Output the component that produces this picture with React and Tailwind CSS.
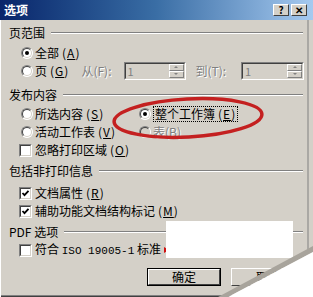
import React from 'react';

const font = "font-['Noto_Sans_CJK_SC','Liberation_Sans',sans-serif]";

const Key = ({ k }) => (
  <span className="ml-[3px] tracking-[1px]">(<span className="underline underline-offset-1">{k}</span>)</span>
);

const Radio = ({ checked, disabled }) => (
  <span className={`w-[12px] h-[12px] rounded-full border border-t-[#808080] border-l-[#808080] border-b-white border-r-white flex items-center justify-center shrink-0 ${disabled ? 'bg-[#d4d0c8]' : 'bg-white'}`}>
    <span className="w-[10px] h-[10px] rounded-full border border-t-[#404040] border-l-[#404040] border-b-[#d4d0c8] border-r-[#d4d0c8] flex items-center justify-center">
      {checked && <span className="w-[4px] h-[4px] rounded-full bg-black"></span>}
    </span>
  </span>
);

const Checkbox = ({ checked }) => (
  <span className="w-[13px] h-[13px] bg-white border border-t-[#808080] border-l-[#808080] border-b-white border-r-white shrink-0">
    <span className="block w-full h-full border border-t-[#404040] border-l-[#404040] border-b-[#d4d0c8] border-r-[#d4d0c8]">
      {checked && (
        <svg width="9" height="9" viewBox="0 0 9 9" className="block">
          <path d="M1.5 4 L3.5 6.2 L7.5 1.8" stroke="black" strokeWidth="1.8" fill="none" />
        </svg>
      )}
    </span>
  </span>
);

const GroupLabel = ({ children, className = '' }) => (
  <div className={`flex items-center h-[16px] pl-[8px] pr-[10px] ${className}`}>
    <span>{children}</span>
    <span className="flex-1 ml-[6px] h-[2px] border-t border-t-[#808080] border-b border-b-white"></span>
  </div>
);

const Spin = () => (
  <div className="flex items-center h-[18px] border border-t-[#808080] border-l-[#808080] border-b-white border-r-white">
    <div className="flex-1 h-full flex items-center bg-[#d4d0c8] border border-t-[#404040] border-l-[#404040] border-b-[#d4d0c8] border-r-[#d4d0c8]">
      <span className="pl-[2px] text-[#808080] text-[11px]">1</span>
      <div className="ml-auto w-[15px] h-full flex flex-col">
        <div className="flex-1 flex items-center justify-center border border-t-white border-l-white border-b-[#808080] border-r-[#808080]">
          <span className="w-0 h-0 border-l-[2px] border-r-[2px] border-b-[2px] border-l-transparent border-r-transparent border-b-[#808080]"></span>
        </div>
        <div className="flex-1 flex items-center justify-center border border-t-white border-l-white border-b-[#808080] border-r-[#808080]">
          <span className="w-0 h-0 border-l-[2px] border-r-[2px] border-t-[2px] border-l-transparent border-r-transparent border-t-[#808080]"></span>
        </div>
      </div>
    </div>
  </div>
);

const Button = ({ children, def }) => (
  <div className={`h-[18px] w-[74px] flex items-center justify-center ${def ? 'border border-black' : ''}`}>
    <div className="w-full h-full flex items-center justify-center border border-t-white border-l-white border-b-[#404040] border-r-[#404040] bg-[#d4d0c8]">
      {children}
    </div>
  </div>
);

export default function App() {
  return (
    <div className={`w-[313px] h-[297px] relative overflow-hidden bg-[#d4d0c8] text-[12px] leading-[14px] text-black ${font}`}>
      {/* title bar */}
      <div className="h-[20px] flex items-center bg-gradient-to-r from-[#0a246a] via-[#3a6ea5] to-[#a6caf0] pl-[4px] pr-[6px]">
        <span className="text-white font-bold text-[12px]">选项</span>
        <div className="ml-auto flex gap-[2px]">
          <div className="w-[16px] h-[12px] bg-[#d4d0c8] border border-t-white border-l-white border-b-[#404040] border-r-[#404040] flex items-center justify-center text-[10px] font-bold leading-none">?</div>
          <div className="w-[16px] h-[12px] bg-[#d4d0c8] border border-t-white border-l-white border-b-[#404040] border-r-[#404040] flex items-center justify-center text-[10px] font-bold leading-none">✕</div>
        </div>
      </div>

      <div className="border-l border-l-white flex flex-col h-[277px]">
        <GroupLabel className="mt-[5px]">页范围</GroupLabel>
        <div className="mt-[3px] h-[17px] flex items-center pl-[20px] gap-[2px]">
          <Radio checked />
          <span>全部<Key k="A" /></span>
        </div>
        <div className="h-[19px] flex items-center pl-[20px] pr-[9px]">
          <Radio />
          <span className="ml-[2px]">页<Key k="G" /></span>
          <span className="ml-[12px] text-[#808080] [text-shadow:1px_1px_0_#fff]">从(F):</span>
          <div className="ml-[12px] w-[62px]"><Spin /></div>
          <span className="ml-[10px] text-[#808080] [text-shadow:1px_1px_0_#fff]">到(T):</span>
          <div className="ml-auto w-[63px]"><Spin /></div>
        </div>

        <GroupLabel className="mt-[7px]">发布内容</GroupLabel>
        <div className="mt-[2px] grid grid-cols-[118px_1fr] pl-[20px]">
          <div className="h-[18px] flex items-center gap-[2px]">
            <Radio />
            <span>所选内容<Key k="S" /></span>
          </div>
          <div className="h-[18px] flex items-center gap-[2px]">
            <Radio checked />
            <span className="border border-dotted border-black px-[1px]">整个工作簿<Key k="E" /></span>
          </div>
          <div className="h-[18px] flex items-center gap-[2px]">
            <Radio />
            <span>活动工作表<Key k="V" /></span>
          </div>
          <div className="h-[18px] flex items-center gap-[2px]">
            <Radio disabled />
            <span className="text-[#808080] [text-shadow:1px_1px_0_#fff]">表(B)</span>
          </div>
        </div>
        <div className="h-[18px] flex items-center pl-[18px] gap-[3px]">
          <Checkbox />
          <span>忽略打印区域<Key k="O" /></span>
        </div>

        <GroupLabel className="mt-[4px]">包括非打印信息</GroupLabel>
        <div className="mt-[5px] h-[18px] flex items-center pl-[18px] gap-[3px]">
          <Checkbox checked />
          <span>文档属性<Key k="R" /></span>
        </div>
        <div className="h-[18px] flex items-center pl-[18px] gap-[3px]">
          <Checkbox checked />
          <span>辅助功能文档结构标记<Key k="M" /></span>
        </div>

        <GroupLabel className="mt-[4px]">PDF 选项</GroupLabel>
        <div className="mt-[1px] h-[18px] flex items-center pl-[18px] gap-[3px]">
          <Checkbox />
          <span>符合 <span className="font-['Liberation_Mono',monospace] text-[11px]">ISO 19005-1</span> 标准</span>
          <span className="w-0 h-0 border-t-[3px] border-b-[3px] border-l-[5px] border-t-transparent border-b-transparent border-l-[#d01010]"></span>
        </div>

        <div className="mt-[9px] flex pl-[146px] gap-[10px]">
          <Button def>确定</Button>
          <Button>取消</Button>
        </div>
        <div className="mt-auto h-[2px] border-t border-t-[#808080] border-b border-b-[#404040]"></div>
      </div>

      {/* red annotation ellipse */}
      <svg className="absolute left-0 top-0 pointer-events-none" width="313" height="297">
        <ellipse cx="188" cy="118" rx="74" ry="19" transform="rotate(-3 188 118)" fill="none" stroke="#c42020" strokeWidth="3.5" />
      </svg>

      {/* white patch */}
      <div className="absolute left-[166px] top-[221px] w-[127px] h-[37px] bg-white"></div>

      {/* page curl */}
      <svg className="absolute left-0 top-0 pointer-events-none" width="313" height="297">
        <line x1="308" y1="20" x2="308" y2="252" stroke="#808080" strokeWidth="1" />
        <polygon points="218,297 313,246 313,252 228,297" fill="#a8a49c" />
        <polygon points="228,297 313,252 313,297" fill="#ffffff" />
      </svg>
    </div>
  );
}
